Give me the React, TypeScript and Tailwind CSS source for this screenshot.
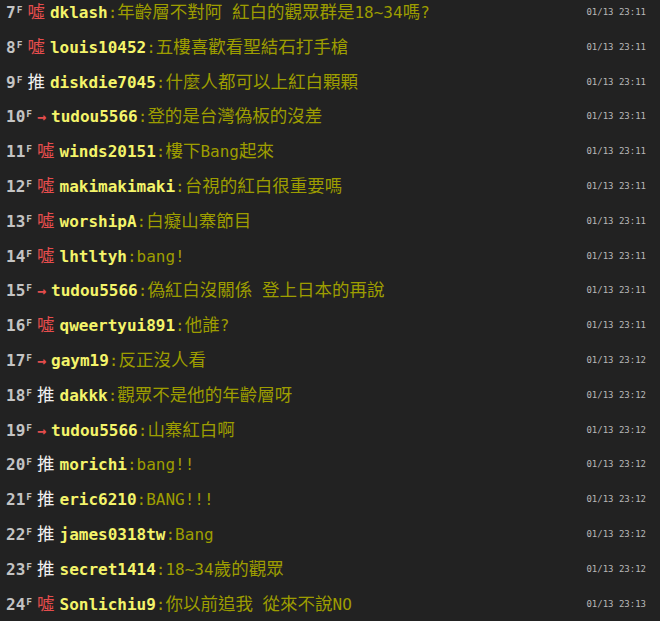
import React from "react";

type Push = {
  floor: number;
  tag: "推" | "噓" | "→";
  user: string;
  text: string;
  time: string;
};

const pushes: Push[] = [
  { floor: 7, tag: "噓", user: "dklash", text: "年齡層不對阿 紅白的觀眾群是18~34嗎?", time: "01/13 23:11" },
  { floor: 8, tag: "噓", user: "louis10452", text: "五樓喜歡看聖結石打手槍", time: "01/13 23:11" },
  { floor: 9, tag: "推", user: "diskdie7045", text: "什麼人都可以上紅白顆顆", time: "01/13 23:11" },
  { floor: 10, tag: "→", user: "tudou5566", text: "登的是台灣偽板的沒差", time: "01/13 23:11" },
  { floor: 11, tag: "噓", user: "winds20151", text: "樓下Bang起來", time: "01/13 23:11" },
  { floor: 12, tag: "噓", user: "makimakimaki", text: "台視的紅白很重要嗎", time: "01/13 23:11" },
  { floor: 13, tag: "噓", user: "worshipA", text: "白癡山寨節目", time: "01/13 23:11" },
  { floor: 14, tag: "噓", user: "lhtltyh", text: "bang!", time: "01/13 23:11" },
  { floor: 15, tag: "→", user: "tudou5566", text: "偽紅白沒關係 登上日本的再說", time: "01/13 23:11" },
  { floor: 16, tag: "噓", user: "qweertyui891", text: "他誰?", time: "01/13 23:11" },
  { floor: 17, tag: "→", user: "gaym19", text: "反正沒人看", time: "01/13 23:12" },
  { floor: 18, tag: "推", user: "dakkk", text: "觀眾不是他的年齡層呀", time: "01/13 23:12" },
  { floor: 19, tag: "→", user: "tudou5566", text: "山寨紅白啊", time: "01/13 23:12" },
  { floor: 20, tag: "推", user: "morichi", text: "bang!!", time: "01/13 23:12" },
  { floor: 21, tag: "推", user: "eric6210", text: "BANG!!!", time: "01/13 23:12" },
  { floor: 22, tag: "推", user: "james0318tw", text: "Bang", time: "01/13 23:12" },
  { floor: 23, tag: "推", user: "secret1414", text: "18~34歲的觀眾", time: "01/13 23:12" },
  { floor: 24, tag: "噓", user: "Sonlichiu9", text: "你以前追我 從來不說NO", time: "01/13 23:13" },
];

const mono = "font-['DejaVu_Sans_Mono','Noto_Sans_CJK_TC',monospace]";
const cjk = "inline-block font-['Noto_Sans_CJK_TC',sans-serif] text-[17.5px] leading-[20px]";

// split text into CJK and latin runs so each gets its own size
function Runs({ text }: { text: string }) {
  const parts = text.split(/([\u3000-\u9fff\uff00-\uffef]+)/).filter(Boolean);
  return (
    <>
      {parts.map((p, i) =>
        /[\u3000-\u9fff\uff00-\uffef]/.test(p) ? (
          <span key={i} className={cjk}>
            {p}
          </span>
        ) : (
          <span key={i}>{p}</span>
        )
      )}
    </>
  );
}

function PushRow({ push }: { push: Push }) {
  const tagColor = push.tag === "推" ? "text-[#f0f0f0]" : "text-[#e44d4d]";
  return (
    <div className="flex h-[34.8px] items-start justify-between pl-[6px] pr-[14px] pt-[1px]">
      <div className={`flex h-[20px] items-baseline whitespace-pre text-[16px] leading-[20px] ${mono}`}>
        {/* floor */}
        <span className="font-bold text-[#c4c4c4]">
          {push.floor}
          <span className="relative -top-[5px] ml-[1px] text-[9.5px]">F</span>
        </span>
        <span
          className={`ml-[5px] ${tagColor} ${
            push.tag === "→" ? "text-[15px] font-bold" : cjk
          }`}
        >
          {push.tag}
        </span>
        <span className="ml-[5px] font-bold text-[#f4f46a]">{push.user}</span>
        <span className="text-[#9d9d00]">
          :<Runs text={push.text} />
        </span>
      </div>
      <span className={`pt-[1px] text-[9px] leading-[20px] text-[#b8b8b8] ${mono}`}>{push.time}</span>
    </div>
  );
}

export default function App() {
  return (
    <div className="h-[621px] w-[660px] overflow-hidden bg-[#222222]">
      {pushes.map((p) => (
        <PushRow key={p.floor} push={p} />
      ))}
    </div>
  );
}
